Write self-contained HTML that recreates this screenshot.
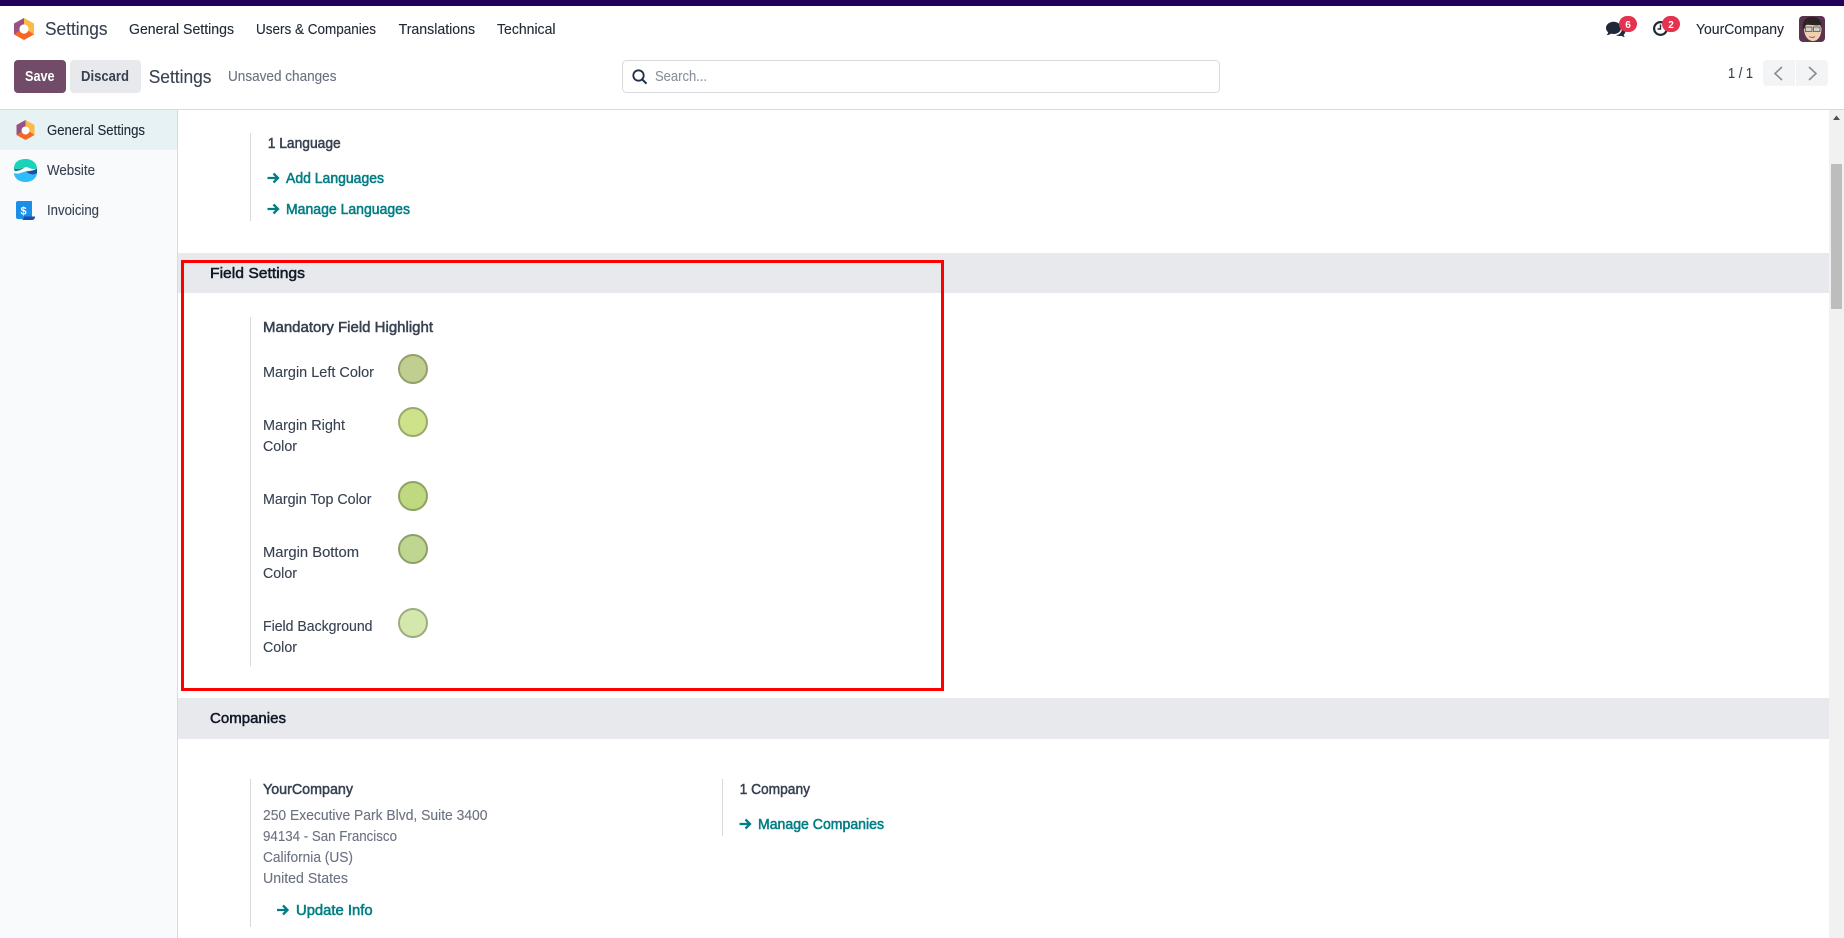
<!DOCTYPE html>
<html lang="en"><head><meta charset="utf-8"><title>Settings</title>
<style>
html,body{margin:0;padding:0;background:#fff;width:1844px;height:938px;overflow:hidden}
svg{display:block}
text{font-family:"Liberation Sans",sans-serif;font-size:14.5px;fill:#374151;stroke:#374151;stroke-width:.12px}
.m{stroke:#374151;stroke-width:.5px}
.h{font-size:15px;fill:#111827;stroke:#111827;stroke-width:.5px}
.g{fill:#6b7280;stroke:#6b7280}
.n{font-size:14.5px;fill:#1f2937;stroke:#1f2937}
.l{fill:#017e84;stroke:#017e84;stroke-width:.55px}
.w{fill:#fff;stroke:none;font-weight:700}
.ln{fill:#d8dadd}
</style></head><body>
<svg xmlns="http://www.w3.org/2000/svg" width="1844" height="938" viewBox="0 0 1844 938">
<rect width="1844" height="938" fill="#fff"/>
<!-- top bar -->
<rect width="1844" height="6" fill="#22005e"/>
<!-- logo -->
<polygon points="24,18 14,23.5 14,34.5 19,32 24,29" fill="#985184"/>
<polygon points="24,18 34,23.5 34,34.5 29,32 24,29" fill="#fbb945"/>
<polygon points="14,34.5 24,40 34,34.5 29,31 19,31" fill="#f86626"/>
<circle cx="24" cy="29" r="4.6" fill="#fff"/>
<text x="45" y="35" style="font-size:18px" textLength="62.5" lengthAdjust="spacingAndGlyphs">Settings</text>
<text class="n" x="129" y="34" textLength="105" lengthAdjust="spacingAndGlyphs">General Settings</text>
<text class="n" x="256" y="34" textLength="120" lengthAdjust="spacingAndGlyphs">Users &amp; Companies</text>
<text class="n" x="398.6" y="34" textLength="76.5" lengthAdjust="spacingAndGlyphs">Translations</text>
<text class="n" x="497" y="34" textLength="58.5" lengthAdjust="spacingAndGlyphs">Technical</text>
<!-- systray -->
<path d="M1606 28c0-3.6 3.6-6.2 7.6-6.2s7.4 2.6 7.4 6.2-3.4 6-7.4 6c-.9 0-1.8-.1-2.6-.4-1.2.9-2.8 1.5-4.4 1.6.8-.9 1.4-2 1.6-3-1.4-1-2.200-2.600-2.200-4.200z" fill="#1f2937"/>
<path d="M1622 27c2 .8 3.4 2.4 3.4 4.3 0 1.400-.7 2.600-1.800 3.500.2.8.6 1.500 1.200 2.200-1.300-.1-2.500-.6-3.400-1.300-.7.2-1.500.3-2.200.3-1.200 0-2.300-.3-3.200-.7 3.400-.4 6.400-2.800 6-8.300z" fill="#1f2937"/>
<rect x="1619" y="16" width="18" height="16" rx="8" fill="#e4334f"/>
<text class="w" x="1628" y="28" text-anchor="middle" style="font-size:10px">6</text>
<circle cx="1660.5" cy="28.5" r="6.4" fill="none" stroke="#1f2937" stroke-width="2.2"/>
<path d="M1660.5 24.500v4.500h-3" fill="none" stroke="#1f2937" stroke-width="1.400"/>
<rect x="1662" y="16" width="18" height="16" rx="8" fill="#e4334f"/>
<text class="w" x="1671" y="28" text-anchor="middle" style="font-size:10px">2</text>
<text class="n" x="1696" y="34" textLength="88" lengthAdjust="spacingAndGlyphs">YourCompany</text>
<!-- avatar -->
<rect x="1799" y="16" width="26" height="26" rx="4" fill="#5a3350"/>
<path d="M1804 28c0 8 4 13 9 13s8.500-5 8.500-13v-3h-17.500z" fill="#f1d0b0"/>
<path d="M1803 29c-1.500-8 3-12 9-12 5 0 10 2 9.500 11l-1.500-3c-3 1-10 0-12-1.500-2 1-3 2.500-3.500 5.500z" fill="#2b2522"/>
<rect x="1805.5" y="27" width="6.500" height="4.500" fill="#cfcfcf" stroke="#555" stroke-width=".8"/>
<rect x="1813.5" y="27" width="6.500" height="4.500" fill="#cfcfcf" stroke="#555" stroke-width=".8"/>
<path d="M1809 36.500q3.500 2 6 0" fill="none" stroke="#9a5a48" stroke-width="1"/>
<!-- control panel -->
<rect x="14" y="60" width="52" height="33" rx="4" fill="#714b67"/>
<text class="w" x="25" y="81" textLength="29.6" lengthAdjust="spacingAndGlyphs">Save</text>
<rect x="70" y="60" width="71" height="33" rx="4" fill="#e7e9ed"/>
<text x="81" y="81" style="font-weight:700;stroke:none" textLength="48" lengthAdjust="spacingAndGlyphs">Discard</text>
<text x="148.7" y="83" style="font-size:18px" textLength="62.8" lengthAdjust="spacingAndGlyphs">Settings</text>
<text class="g" x="228" y="81" textLength="108.5" lengthAdjust="spacingAndGlyphs">Unsaved changes</text>
<!-- search -->
<rect x="622.5" y="60.5" width="597" height="32" rx="4" fill="#fff" stroke="#d8dadd"/>
<circle cx="638.5" cy="75.5" r="5.2" fill="none" stroke="#1f2f4a" stroke-width="1.8"/>
<path d="M642.3 79.5l4.200 4.200" stroke="#1f2f4a" stroke-width="2"/>
<text x="655" y="81" style="fill:#8b929c;stroke:#8b929c" textLength="52" lengthAdjust="spacingAndGlyphs">Search...</text>
<!-- pager -->
<text x="1728" y="78" textLength="25" lengthAdjust="spacingAndGlyphs">1 / 1</text>
<path d="M1767 60h28v26h-28a4 4 0 0 1-4-4v-18a4 4 0 0 1 4-4z" fill="#f3f4f6"/>
<path d="M1796 60h28a4 4 0 0 1 4 4v18a4 4 0 0 1-4 4h-28z" fill="#f3f4f6"/>
<path d="M1782 67l-7 6.500 7 6.500" fill="none" stroke="#868b92" stroke-width="1.6"/>
<path d="M1809 67l7 6.500-7 6.500" fill="none" stroke="#868b92" stroke-width="1.6"/>
<rect x="0" y="109" width="1844" height="1" fill="#d8dadd"/>
<!-- sidebar -->
<rect x="0" y="110" width="177" height="828" fill="#f9fafb"/>
<rect x="177" y="110" width="1" height="828" fill="#d8dadd"/>
<rect x="0" y="110" width="177" height="40" fill="#e6f2f3"/>
<g transform="translate(1.5 102)">
<polygon points="24,18 15,23 15,33 19.5,31 24,28.5" fill="#985184"/>
<polygon points="24,18 33,23 33,33 28.5,31 24,28.5" fill="#fbb945"/>
<polygon points="15,33 24,38 33,33 28.5,30 19.5,30" fill="#f86626"/>
<circle cx="24" cy="28.5" r="4" fill="#fff"/>
</g>
<text class="n" x="47" y="135" textLength="98" lengthAdjust="spacingAndGlyphs">General Settings</text>
<!-- website icon -->
<path d="M14 168.500C14 162 19 159 25.500 159S37 163 37 168.500C32 170.500 29 167 25.500 167S19 170 14 168.500z" fill="#1ad3bb"/>
<path d="M14 168.500C19 170 22 167.500 25.500 167C22 169 19 171.500 14.500 171z" fill="#1a7f7f"/>
<path d="M14 173C18 175 22 172 25.500 171.500C29 174 33 176 37 173C37 178 32 182 25.500 182S14 178 14 173z" fill="#2ebcfa"/>
<path d="M25.500 171.500C29 171 33 171 37 168.500L37 173C33 176 29 174 25.500 171.500z" fill="#1f4ea3"/>
<text x="47" y="175" textLength="48" lengthAdjust="spacingAndGlyphs">Website</text>
<!-- invoicing icon -->
<path d="M18 201h14v18H18a2 2 0 0 1-2-2v-14a2 2 0 0 1 2-2z" fill="#1a8fe8"/>
<path d="M24 216.500h11c0 2-1 3.500-3 3.500H21c2 0 3-1.500 3-3.500z" fill="#1f4ea3"/>
<text class="w" x="23.5" y="214.500" text-anchor="middle" style="font-size:11px">$</text>
<text x="47" y="215" textLength="52" lengthAdjust="spacingAndGlyphs">Invoicing</text>
<!-- languages -->
<rect class="ln" x="250" y="133" width="1" height="88"/>
<text class="m" x="267.7" y="148" textLength="73" lengthAdjust="spacingAndGlyphs">1 Language</text>
<path d="M267.5 178h10M273.500 173.500l4.500 4.500-4.500 4.500" fill="none" stroke="#017e84" stroke-width="2.3"/>
<text class="l" x="286" y="183" textLength="98" lengthAdjust="spacingAndGlyphs">Add Languages</text>
<path d="M267.5 209h10M273.500 204.500l4.500 4.500-4.500 4.500" fill="none" stroke="#017e84" stroke-width="2.3"/>
<text class="l" x="286" y="214" textLength="124" lengthAdjust="spacingAndGlyphs">Manage Languages</text>
<!-- field settings band -->
<rect x="178" y="253" width="1651" height="40" fill="#e7e9ed"/>
<text class="h" x="210" y="278" textLength="95" lengthAdjust="spacingAndGlyphs">Field Settings</text>
<rect class="ln" x="250" y="317" width="1" height="349"/>
<text class="m" x="263" y="332" textLength="170" lengthAdjust="spacingAndGlyphs">Mandatory Field Highlight</text>
<text x="263" y="377" textLength="111" lengthAdjust="spacingAndGlyphs">Margin Left Color</text>
<circle cx="413" cy="369" r="14" fill="#c0ce8f" stroke="#93a069" stroke-width="2"/>
<text x="263" y="430" textLength="82" lengthAdjust="spacingAndGlyphs">Margin Right</text>
<text x="263" y="451" textLength="34" lengthAdjust="spacingAndGlyphs">Color</text>
<circle cx="413" cy="422" r="14" fill="#cde28a" stroke="#98a96a" stroke-width="2"/>
<text x="263" y="504" textLength="108.5" lengthAdjust="spacingAndGlyphs">Margin Top Color</text>
<circle cx="413" cy="496" r="14" fill="#bed97f" stroke="#8fa265" stroke-width="2"/>
<text x="263" y="557" textLength="96" lengthAdjust="spacingAndGlyphs">Margin Bottom</text>
<text x="263" y="578" textLength="34" lengthAdjust="spacingAndGlyphs">Color</text>
<circle cx="413" cy="549" r="14" fill="#bfd690" stroke="#8f9f6c" stroke-width="2"/>
<text x="263" y="631" textLength="109.5" lengthAdjust="spacingAndGlyphs">Field Background</text>
<text x="263" y="652" textLength="34" lengthAdjust="spacingAndGlyphs">Color</text>
<circle cx="413" cy="623" r="14" fill="#d4e8ae" stroke="#9fac80" stroke-width="2"/>
<!-- red box -->
<rect x="182.5" y="261.5" width="760" height="428" fill="none" stroke="#ff0000" stroke-width="3"/>
<!-- companies -->
<rect x="178" y="698" width="1651" height="41" fill="#e7e9ed"/>
<text class="h" x="210" y="723" textLength="76" lengthAdjust="spacingAndGlyphs">Companies</text>
<rect class="ln" x="250" y="779" width="1" height="148"/>
<text class="m" x="263" y="794" textLength="90" lengthAdjust="spacingAndGlyphs">YourCompany</text>
<text class="g" x="263" y="820" textLength="224.5" lengthAdjust="spacingAndGlyphs">250 Executive Park Blvd, Suite 3400</text>
<text class="g" x="263" y="841" textLength="134" lengthAdjust="spacingAndGlyphs">94134 - San Francisco</text>
<text class="g" x="263" y="862" textLength="90" lengthAdjust="spacingAndGlyphs">California (US)</text>
<text class="g" x="263" y="883" textLength="85" lengthAdjust="spacingAndGlyphs">United States</text>
<path d="M277 910h10M283 905.500l4.500 4.500-4.500 4.500" fill="none" stroke="#017e84" stroke-width="2.3"/>
<text class="l" x="296" y="915" textLength="76.6" lengthAdjust="spacingAndGlyphs">Update Info</text>
<rect class="ln" x="722" y="779" width="1" height="57"/>
<text class="m" x="739.6" y="794" textLength="70.4" lengthAdjust="spacingAndGlyphs">1 Company</text>
<path d="M739.5 824h10M745.500 819.500l4.500 4.500-4.500 4.500" fill="none" stroke="#017e84" stroke-width="2.3"/>
<text class="l" x="758" y="829" textLength="126" lengthAdjust="spacingAndGlyphs">Manage Companies</text>
<!-- scrollbar -->
<rect x="1829" y="110" width="15" height="828" fill="#f1f1f1"/>
<rect x="1831" y="164" width="11" height="145" fill="#bdbdbd"/>
<polygon points="1836.5,115.5 1833,120 1840,120" fill="#505050"/>
</svg>
</body></html>
